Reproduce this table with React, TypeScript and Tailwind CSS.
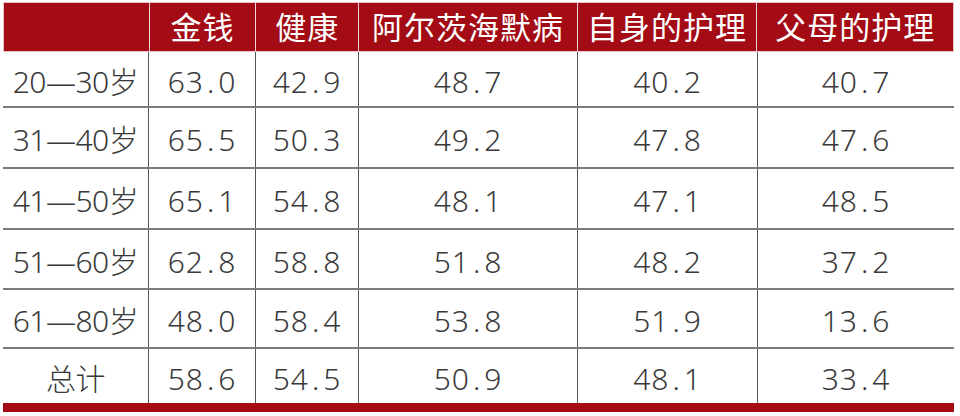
import React from 'react';

const cols = ['w-[145px]', 'w-[107px]', 'w-[103px]', 'w-[219px]', 'w-[180px]', 'w-[197px]'];

const headers = ['', '金钱', '健康', '阿尔茨海默病', '自身的护理', '父母的护理'];

const rows: { label: string; values: string[]; h: string }[] = [
  { label: '20—30岁', values: ['63.0', '42.9', '48.7', '40.2', '40.7'], h: 'h-[56px]' },
  { label: '31—40岁', values: ['65.5', '50.3', '49.2', '47.8', '47.6'], h: 'h-[61px]' },
  { label: '41—50岁', values: ['65.1', '54.8', '48.1', '47.1', '48.5'], h: 'h-[61px]' },
  { label: '51—60岁', values: ['62.8', '58.8', '51.8', '48.2', '37.2'], h: 'h-[60px]' },
  { label: '61—80岁', values: ['48.0', '58.4', '53.8', '51.9', '13.6'], h: 'h-[59px]' },
  { label: '总计', values: ['58.6', '54.5', '50.9', '48.1', '33.4'], h: 'h-[54px]' },
];

// numbers in the source have a loose dot, e.g. "63 . 0"
function Num({ v }: { v: string }) {
  const [a, b] = v.split('.');
  return (
    <span>
      {a}
      <span className="mx-[3px]">.</span>
      {b}
    </span>
  );
}

export default function App() {
  return (
    <div
      className="w-[960px] h-[416px] bg-white pt-[2px] pl-[3px]"
      style={{ fontFamily: '"Noto Sans", "Noto Sans CJK SC", sans-serif' }}
    >
      <div className="w-[951px]">
        <div className="flex h-[50px] bg-[#a30b15] border border-[#e9c3c5]">
          {headers.map((h, i) => (
            <div
              key={i}
              className={`${cols[i]} flex items-center justify-center text-white text-[31px] tracking-[1px] ${
                i > 0 ? 'border-l border-[#f0d4d5]' : ''
              }`}
            >
              {h}
            </div>
          ))}
        </div>
        {rows.map((r, ri) => (
          <div
            key={r.label}
            className={`flex ${r.h} ${ri < rows.length - 1 ? 'border-b-2 border-[#7a7a7a]' : ''}`}
          >
            <div className={`${cols[0]} flex items-center justify-center text-[30px] font-light text-[#3a3a3a] tracking-[-0.5px] pt-[4px]`}>
              {r.label}
            </div>
            {r.values.map((v, vi) => (
              <div
                key={vi}
                className={`${cols[vi + 1]} flex items-center justify-center border-l border-[#555] text-[30px] font-light text-[#3a3a3a] tracking-[1px] pt-[4px]`}
              >
                <Num v={v} />
              </div>
            ))}
          </div>
        ))}
        <div className="h-[9px] bg-[#a30b15]" />
      </div>
    </div>
  );
}
